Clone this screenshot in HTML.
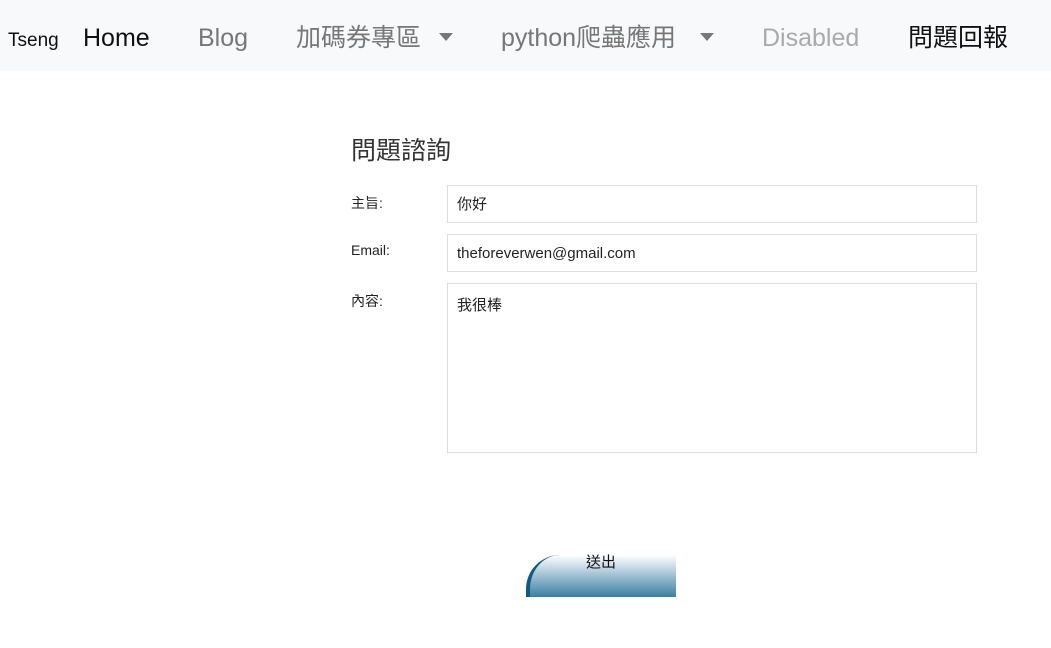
<!DOCTYPE html>
<html><head><meta charset="utf-8"><style>
body{margin:0;width:1051px;height:648px;background:#fff;font-family:"Liberation Sans","Noto Sans CJK TC",sans-serif;position:relative;overflow:hidden}
.nav{position:absolute;left:0;top:0;width:1051px;height:71px;background:#f8f9fa}
.nav span{position:absolute;top:21px;font-size:25px;line-height:34px;white-space:nowrap}
.caret{display:inline-block;width:0;height:0;border-left:7px solid transparent;border-right:7px solid transparent;border-top:8px solid #777;vertical-align:middle;margin-left:18px;margin-top:-4px}
.lbl{position:absolute;left:351px;font-size:14px;color:#222}
.inp{position:absolute;left:447px;width:530px;border:1px solid #ddd;box-sizing:border-box;font-size:15px;color:#222;padding-left:9px}
</style></head><body>
<div class="nav">
<span style="left:8px;font-size:19px;top:24px;color:#111">Tseng</span>
<span style="left:83px;color:#111">Home</span>
<span style="left:198px;color:#777">Blog</span>
<span style="left:296px;color:#777">加碼券專區<i class="caret"></i></span>
<span style="left:501px;color:#777">python爬蟲應用<i class="caret" style="margin-left:24px"></i></span>
<span style="left:762px;color:#aaa">Disabled</span>
<span style="left:908px;color:#111">問題回報</span>
</div>
<div style="position:absolute;left:351px;top:131px;font-size:25px;color:#333">問題諮詢</div>
<div class="lbl" style="top:193px">主旨:</div>
<div class="lbl" style="top:242px">Email:</div>
<div class="lbl" style="top:291px">內容:</div>
<div class="inp" style="top:185px;height:38px;line-height:38px">你好</div>
<div class="inp" style="top:234px;height:38px;line-height:38px">theforeverwen@gmail.com</div>
<div class="inp" style="top:283px;height:170px;padding-top:10px">我很棒</div>
<div style="position:absolute;left:526px;top:555px;width:150px;height:42px;box-sizing:border-box;border-left:4px solid #0d5a85;border-top-left-radius:34px;background:linear-gradient(#fff,#3a7fa3);text-align:center;font-size:15px;line-height:16px;color:#111;padding-right:4px"><span>送出</span></div>
</body></html>
